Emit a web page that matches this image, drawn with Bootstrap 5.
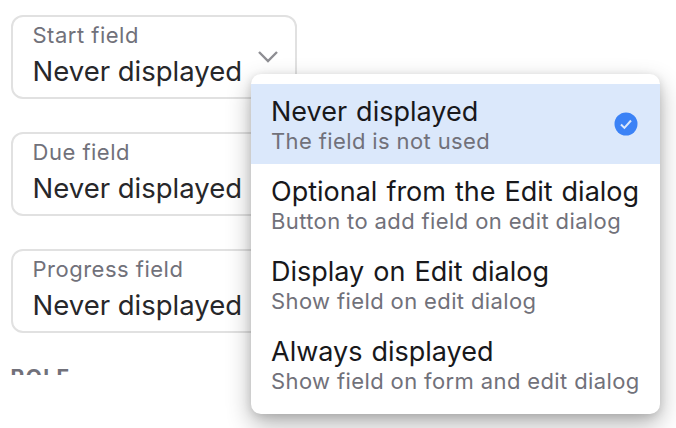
<!DOCTYPE html>
<html lang="en">
<head>
<meta charset="utf-8">
<title>Fields</title>
<link rel="stylesheet" href="https://cdn.jsdelivr.net/npm/bootstrap@5.3.0/dist/css/bootstrap.min.css">
<style>
html, body { width: 676px; height: 428px; overflow: hidden; background: #fff; }
body { font-family: Inter, "Liberation Sans", sans-serif; color: #27272a; position: relative; }
.form-clip { height: 375px; overflow: hidden; padding: 14.5px 0 0 10.5px; width: 297px; }
.field-box { width: 286px; height: 84px; border: 2px solid #e1e1e1; border-radius: 12px; padding: 5px 20px 0 20px; margin-bottom: 33px; position: relative; }
.field-label { font-size: 22px; line-height: 26px; color: #71717a; letter-spacing: .5px; white-space: nowrap; }
.field-value { font-size: 27.5px; line-height: 36px; margin-top: 5px; color: #27272a; white-space: nowrap; }
.field-chevron { position: absolute; right: 16px; top: 33px; display: block; }
.role-title { font-size: 21px; font-weight: 700; letter-spacing: 1.4px; color: #71717a; line-height: 24px; margin-top: 1px; }
.pop-menu { position: absolute; left: 251px; top: 74px; width: 409px; height: 340px; background: #fff; border-radius: 10px; padding: 10px 0; box-shadow: 0 10px 25px rgba(0,0,0,.3), 0 2px 8px rgba(0,0,0,.12); }
.pop-item { height: 80px; padding: 11px 20px 0 20px; position: relative; }
.pop-item.is-active { background: #dbe8fb; }
.pop-title { font-size: 27px; line-height: 34px; color: #18181b; white-space: nowrap; word-spacing: 1.4px; }
.pop-sub { font-size: 22px; line-height: 25px; color: #71717a; white-space: nowrap; letter-spacing: .38px; }
.pop-check { position: absolute; right: 22px; top: 28px; display: block; }
</style>
</head>
<body>
<div class="form-clip">
  <div class="field-box">
    <div class="field-label">Start field</div>
    <div class="field-value">Never displayed</div>
    <svg class="field-chevron" width="22" height="14" viewBox="0 0 22 14"><path d="M2 2l9 9 9-9" fill="none" stroke="#8e8e93" stroke-width="2.4"/></svg>
  </div>
  <div class="field-box">
    <div class="field-label">Due field</div>
    <div class="field-value">Never displayed</div>
  </div>
  <div class="field-box">
    <div class="field-label">Progress field</div>
    <div class="field-value">Never displayed</div>
  </div>
  <div class="role-title">ROLE</div>
</div>
<div class="pop-menu">
  <div class="pop-item is-active">
    <div class="pop-title">Never displayed</div>
    <div class="pop-sub">The field is not used</div>
    <svg class="pop-check" width="24" height="24" viewBox="0 0 24 24"><circle cx="12" cy="12" r="11.5" fill="#3b82f6"/><path d="M7 12.5l3.4 3.4 6.6-7.4" fill="none" stroke="#dbe8fb" stroke-width="2"/></svg>
  </div>
  <div class="pop-item">
    <div class="pop-title">Optional from the Edit dialog</div>
    <div class="pop-sub">Button to add field on edit dialog</div>
  </div>
  <div class="pop-item">
    <div class="pop-title">Display on Edit dialog</div>
    <div class="pop-sub">Show field on edit dialog</div>
  </div>
  <div class="pop-item">
    <div class="pop-title">Always displayed</div>
    <div class="pop-sub">Show field on form and edit dialog</div>
  </div>
</div>
<script src="https://cdn.jsdelivr.net/npm/bootstrap@5.3.0/dist/js/bootstrap.bundle.min.js"></script>
</body>
</html>
